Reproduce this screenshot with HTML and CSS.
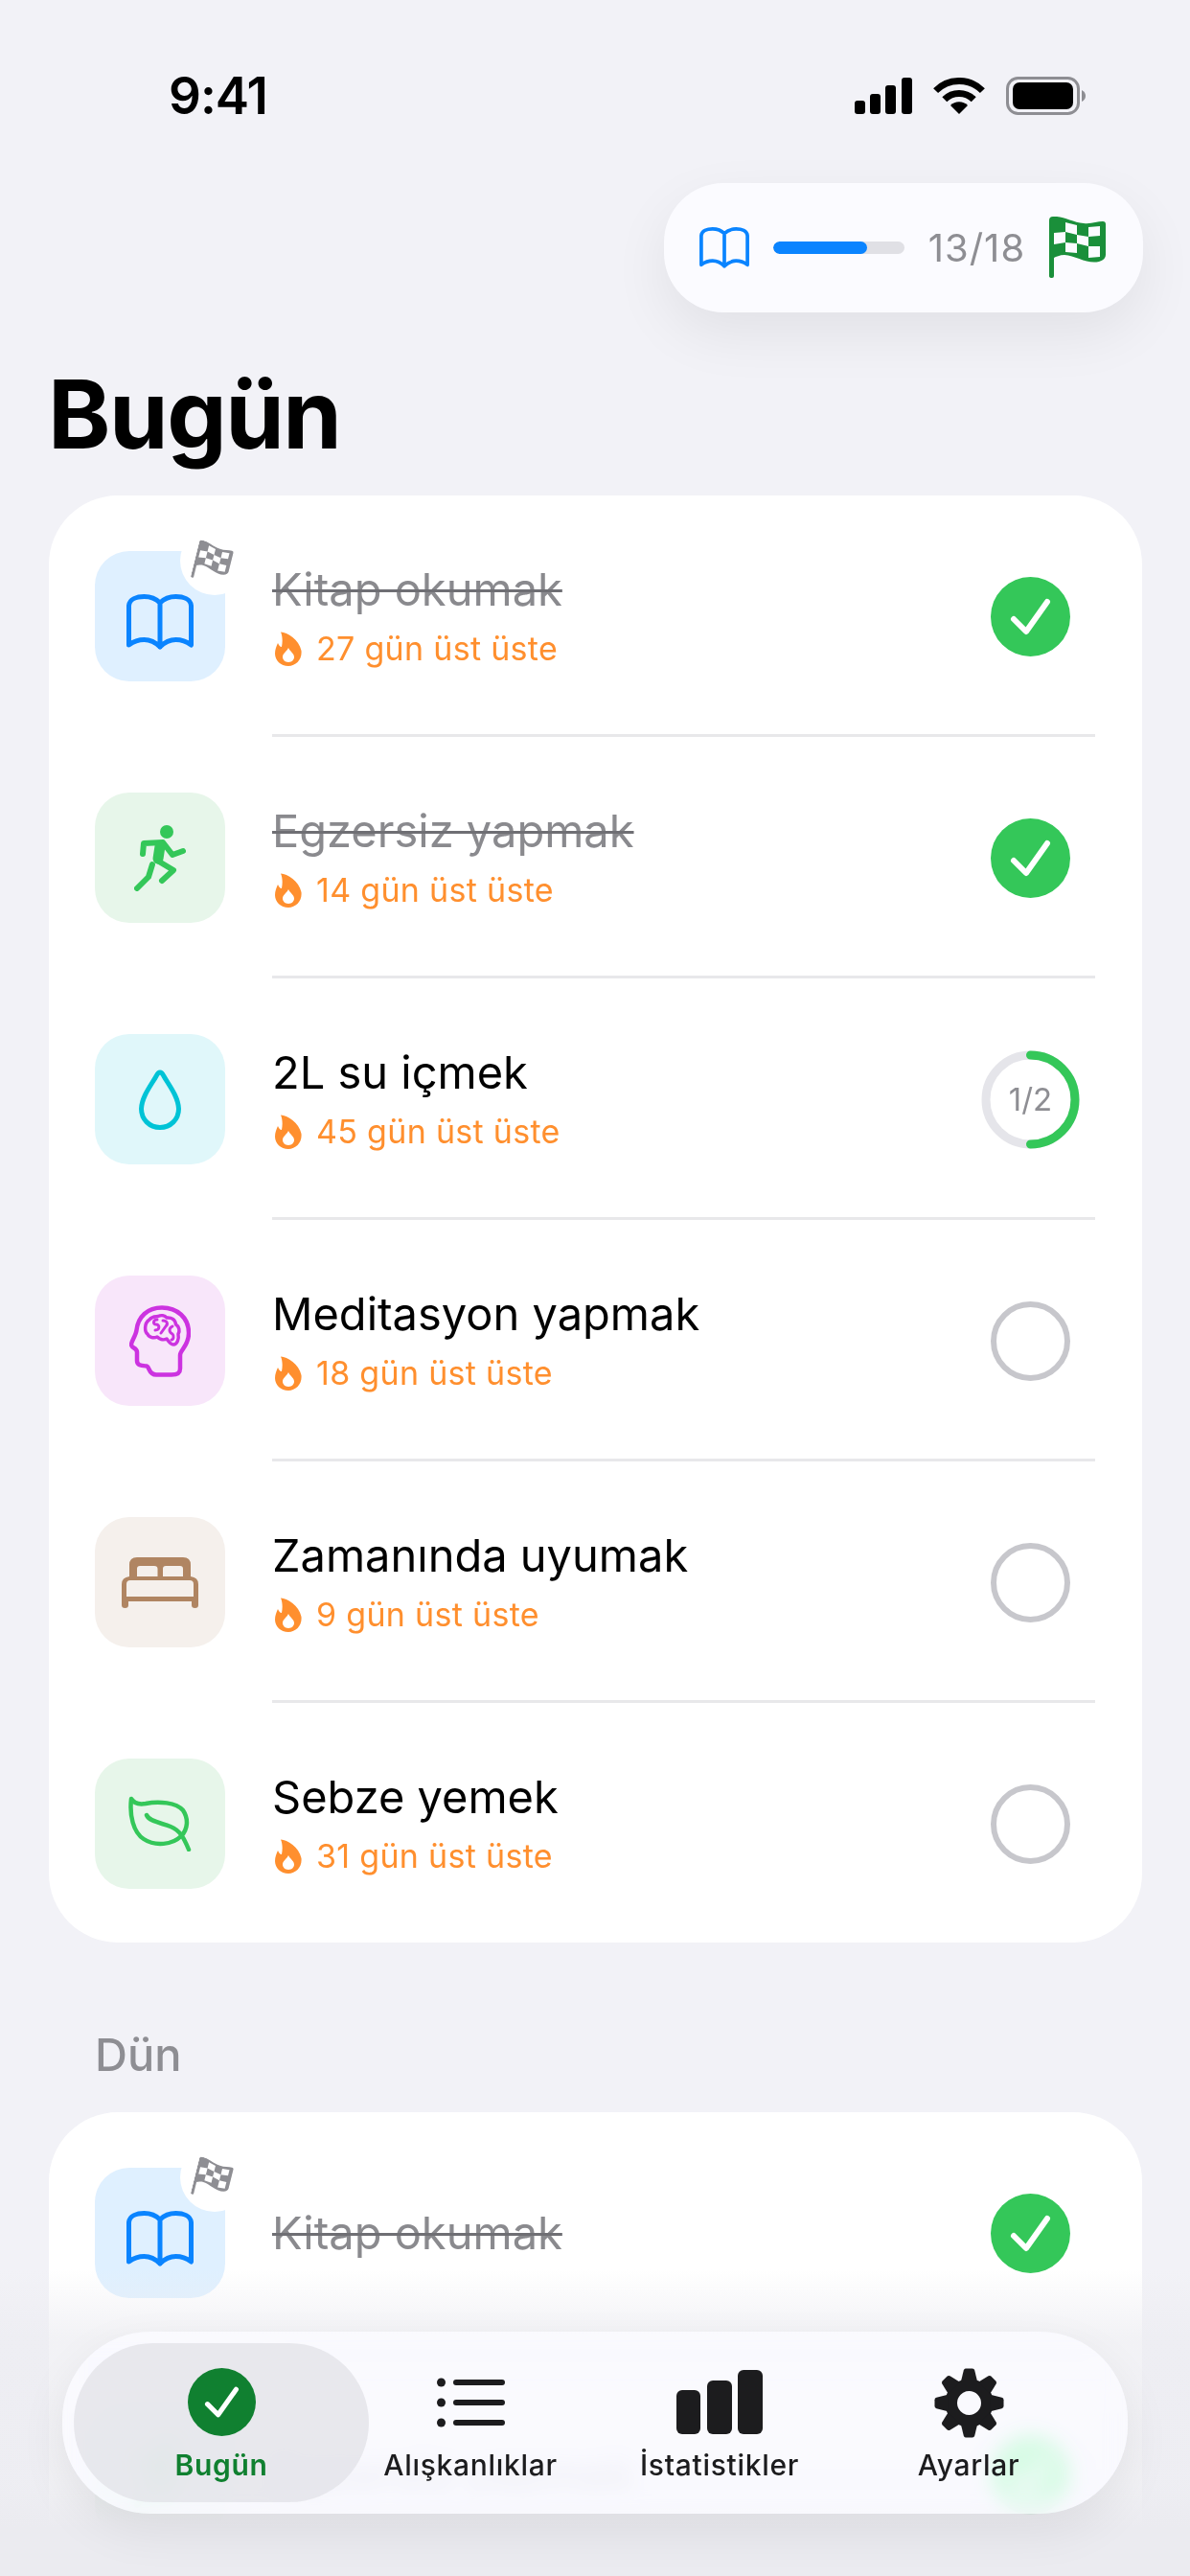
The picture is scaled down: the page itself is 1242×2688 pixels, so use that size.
FILE: index.html
```html
<!DOCTYPE html>
<html lang="tr">
<head>
    <meta charset="UTF-8">
    <meta name="viewport" content="width=device-width, initial-scale=1.0">
    <title>Bugün</title>
    <link rel="stylesheet" href="styles.css">
</head>
<body>
    <svg class="defs" xmlns="http://www.w3.org/2000/svg">
        <symbol id="book" viewBox="0 0 70 58">
            <path fill="none" stroke="currentColor" stroke-width="5" stroke-linecap="round" stroke-linejoin="round" d="M35 9C30 4 24 2.5 18.500 2.500C11 2.500 3 5 2.500 12V53C8 49 13 47.500 18.500 47.500C25 47.500 30 50 35 55C40 50 45 47.500 51.500 47.500C57 47.500 62 49 67.500 53V12C67 5 59 2.500 51.500 2.500C46 2.500 40 4 35 9V55"/>
        </symbol>
        <symbol id="flag" viewBox="0 0 60 65">
            <path fill="currentColor" fill-rule="evenodd" d="M0 4Q0 0 4 0C14-1 24 6 36 7C44 8 50 5 56 5Q59 5 59 8V40Q59 45 52 47C40 50 28 41 16 40C11 40 7 42 5 43V62Q5 64 3 64Q0 64 0 62ZM17 6L29 9V19L17 16ZM41 11L53 10V20L41 21ZM5 17L17 16V27L5 29ZM29 19L41 21V31L29 28ZM17 27L29 28V38L17 37ZM41 31L53 31V42L41 43Z"/>
        </symbol>
        <symbol id="flame" viewBox="0 0 28 36">
            <path fill="currentColor" fill-rule="evenodd" d="M6 .5C13 1 25 8 27.500 20C28.500 29 22 36 14 36C6 36 0 30 0 23C0 19 1.500 15 3 12C4 14 5 16 7 16C8 11 8 5 6 .5ZM14 32C10 32 8 29 8 26.500C8 23 12 21 14 17C16 21 20 23 20 26.500C20 29 18 32 14 32Z"/>
        </symbol>
        <symbol id="check" viewBox="0 0 83 83">
            <circle cx="41.500" cy="41.500" r="41.500" fill="currentColor"/>
            <path fill="none" stroke="#fff" stroke-width="6" stroke-linecap="round" stroke-linejoin="round" d="M24 44L37 57L59 26"/>
        </symbol>
        <symbol id="run" viewBox="0 0 54 69">
            <circle cx="34" cy="7" r="7" fill="currentColor"/>
            <g fill="none" stroke="currentColor" stroke-linecap="round" stroke-linejoin="round">
                <path stroke-width="6" d="M9 30L10 19L30 18L40 31L51 27"/>
                <path stroke-width="11" d="M27 22L25 35"/>
                <path stroke-width="6" d="M26 38L41 47L29 58"/>
                <path stroke-width="6" d="M19 41L15 54L3 66"/>
            </g>
        </symbol>
    </svg>

    <div class="statusbar">
        <span class="clock">9:41</span>
        <div class="status-icons">
            <svg class="signal" viewBox="0 0 60 38">
                <rect x="0" y="24" width="11" height="14" rx="3"/>
                <rect x="16" y="17" width="11" height="21" rx="3"/>
                <rect x="32" y="8" width="11" height="30" rx="3"/>
                <rect x="49" y="0" width="11" height="38" rx="3"/>
            </svg>
            <svg class="wifi" viewBox="0 0 54 38">
                <path fill="none" stroke="#000" stroke-width="7" d="M2.600 13.600A34.500 34.500 0 0 1 51.400 13.600M11.800 22.800A21.500 21.500 0 0 1 42.200 22.800"/>
                <path d="M27 38L18 29A12.700 12.700 0 0 1 36 29Z"/>
            </svg>
            <svg class="battery" viewBox="0 0 83 40">
                <rect x="1.500" y="1.500" width="74" height="37" rx="11" fill="none" stroke="#8e8e93" stroke-width="3"/>
                <rect x="7" y="6" width="63" height="28" rx="7"/>
                <path d="M79 14Q83 16 83 20Q83 24 79 26Z" fill="#8e8e93"/>
            </svg>
        </div>
    </div>

    <div class="goal-wrap">
        <div class="goal-pill">
            <svg class="goal-book"><use href="#book"/></svg>
            <div class="goal-bar"><div class="goal-fill" style="width: 72%"></div></div>
            <span class="goal-count">13/18</span>
            <svg class="goal-flag"><use href="#flag"/></svg>
        </div>
    </div>

    <h1 class="page-title">Bugün</h1>

    <section class="card">
        <div class="row">
            <div class="tile tile-blue">
                <svg class="ic-book"><use href="#book"/></svg>
                <span class="badge"><svg><use href="#flag"/></svg></span>
            </div>
            <div class="info">
                <div class="name done">Kitap okumak</div>
                <div class="streak"><svg><use href="#flame"/></svg><span>27 gün üst üste</span></div>
            </div>
            <div class="slot"><svg class="mark"><use href="#check"/></svg></div>
        </div>
        <hr class="sep">
        <div class="row">
            <div class="tile tile-green">
                <svg class="ic-run"><use href="#run"/></svg>
            </div>
            <div class="info">
                <div class="name done">Egzersiz yapmak</div>
                <div class="streak"><svg><use href="#flame"/></svg><span>14 gün üst üste</span></div>
            </div>
            <div class="slot"><svg class="mark"><use href="#check"/></svg></div>
        </div>
        <hr class="sep">
        <div class="row">
            <div class="tile tile-cyan">
                <svg class="ic-drop" viewBox="0 0 44 63">
                    <path fill="none" stroke="currentColor" stroke-width="5" stroke-linejoin="round" d="M22 3C24 3 25 5 26 7C31 16 41 28 41.500 41C41.500 52 33 60.500 22 60.500C11 60.500 2.500 52 2.500 41C3 28 13 16 18 7C19 5 20 3 22 3Z"/>
                </svg>
            </div>
            <div class="info">
                <div class="name">2L su içmek</div>
                <div class="streak"><svg><use href="#flame"/></svg><span>45 gün üst üste</span></div>
            </div>
            <div class="slot progress">
                <svg viewBox="0 0 103 103">
                    <circle cx="51.500" cy="51.500" r="46.500" fill="none" stroke="#e5e5ea" stroke-width="9"/>
                    <path fill="none" stroke="#34c759" stroke-width="9" stroke-linecap="round" d="M51.500 5A46.500 46.500 0 0 1 51.500 98"/>
                </svg>
                <span class="progress-text">1/2</span>
            </div>
        </div>
        <hr class="sep">
        <div class="row">
            <div class="tile tile-purple">
                <svg class="ic-brain" viewBox="0 0 64 75">
                    <g fill="none" stroke="currentColor" stroke-linecap="round" stroke-linejoin="round">
                        <path stroke-width="4.500" d="M53 66V52C53 47 62 42 62 29C62 13 50 2.500 34 2.500C19 2.500 9 12 7.500 26C7 31 2 38 2 41C2 45 8 44 8 49V58C8 63 13 63 18 63.500C21 64 20 72.500 28 72.500H44C50 72.500 53 71 53 66Z"/>
                        <path stroke-width="3.500" d="M21 15C24 11 28 12 30 11.500C33 10 37 10.500 39 13C44 12.500 48 15 48.500 20C52 22 53 27 51 30C52 35 50 41 46 41C43 41 41 38 39 35C35 37 31 35 29 33C25 35 20 33 19 30C16 28 15 19 21 15Z"/>
                        <path stroke-width="3" d="M29 15C25 15 24 20 28 20C32 20 32 26 27 26M35 16C39 16 41 19 38 22L33 29M45 22C41 24 41 28 45 30C47 32 46 36 44 36"/>
                    </g>
                </svg>
            </div>
            <div class="info">
                <div class="name">Meditasyon yapmak</div>
                <div class="streak"><svg><use href="#flame"/></svg><span>18 gün üst üste</span></div>
            </div>
            <div class="slot"><span class="empty"></span></div>
        </div>
        <hr class="sep">
        <div class="row">
            <div class="tile tile-sand">
                <svg class="ic-bed" viewBox="0 0 80 53">
                    <path fill="currentColor" fill-rule="evenodd" d="M8 8Q8 0 16 0H64Q72 0 72 8V20Q80 21 80 28V50Q80 53 76.500 53Q73 53 73 50V46H7V50Q7 53 3.500 53Q0 53 0 50V28Q0 21 8 20ZM16 20V12Q16 9 19 9H34Q37.500 9 37.500 12V20ZM43 20V12Q43 9 46 9H61Q64 9 64 12V20ZM9 24H71Q75 24 75 28V41H5V28Q5 24 9 24Z"/>
                </svg>
            </div>
            <div class="info">
                <div class="name">Zamanında uyumak</div>
                <div class="streak"><svg><use href="#flame"/></svg><span>9 gün üst üste</span></div>
            </div>
            <div class="slot"><span class="empty"></span></div>
        </div>
        <hr class="sep">
        <div class="row">
            <div class="tile tile-green">
                <svg class="ic-leaf" viewBox="0 0 67 58">
                    <path fill="none" stroke="currentColor" stroke-width="4.500" stroke-linecap="round" stroke-linejoin="round" d="M3 3C6 8 12 9 18 8C32 5 50 7 57 15C63 24 62 35 55 42C46 51 28 53 16 45C5 38 1 20 3 3ZM19 20C22 27 34 28 44 32C54 36 58 44 63 56"/>
                </svg>
            </div>
            <div class="info">
                <div class="name">Sebze yemek</div>
                <div class="streak"><svg><use href="#flame"/></svg><span>31 gün üst üste</span></div>
            </div>
            <div class="slot"><span class="empty"></span></div>
        </div>
    </section>

    <h2 class="section-title">Dün</h2>

    <section class="card">
        <div class="row">
            <div class="tile tile-blue">
                <svg class="ic-book"><use href="#book"/></svg>
                <span class="badge"><svg><use href="#flag"/></svg></span>
            </div>
            <div class="info">
                <div class="name done">Kitap okumak</div>
            </div>
            <div class="slot"><svg class="mark"><use href="#check"/></svg></div>
        </div>
        <hr class="sep">
        <div class="row">
            <div class="tile tile-green">
                <svg class="ic-run"><use href="#run"/></svg>
            </div>
            <div class="info">
                <div class="name done">Egzersiz yapmak</div>
            </div>
            <div class="slot"><svg class="mark"><use href="#check"/></svg></div>
        </div>
    </section>

    <div class="fade"></div>

    <nav class="tabbar">
        <div class="tab active">
            <svg class="tab-icon tab-check"><use href="#check"/></svg>
            <span class="tab-label">Bugün</span>
        </div>
        <div class="tab">
            <svg class="tab-icon" viewBox="0 0 71 73">
                <circle cx="4.500" cy="15" r="4.500"/>
                <circle cx="4.500" cy="36" r="4.500"/>
                <circle cx="4.500" cy="57" r="4.500"/>
                <rect x="17" y="12" width="54" height="6" rx="3"/>
                <rect x="17" y="33" width="54" height="6" rx="3"/>
                <rect x="17" y="54" width="54" height="6" rx="3"/>
            </svg>
            <span class="tab-label">Alışkanlıklar</span>
        </div>
        <div class="tab">
            <svg class="tab-icon" viewBox="0 0 90 73">
                <rect x="0" y="23" width="25" height="46" rx="6"/>
                <rect x="32" y="13" width="26" height="56" rx="6"/>
                <rect x="64" y="2" width="26" height="67" rx="6"/>
            </svg>
            <span class="tab-label">İstatistikler</span>
        </div>
        <div class="tab">
            <svg class="tab-icon" viewBox="-38 -38 76 76">
                <circle r="19.500" fill="none" stroke="#1c1c1e" stroke-width="13"/>
                <g>
                    <path id="tooth" d="M-9-23L-6-35.500Q-5.500-37.500-3.500-37.500H3.500Q5.500-37.500 6-35.500L9-23Z"/>
                    <use href="#tooth" transform="rotate(45)"/>
                    <use href="#tooth" transform="rotate(90)"/>
                    <use href="#tooth" transform="rotate(135)"/>
                    <use href="#tooth" transform="rotate(180)"/>
                    <use href="#tooth" transform="rotate(225)"/>
                    <use href="#tooth" transform="rotate(270)"/>
                    <use href="#tooth" transform="rotate(315)"/>
                </g>
            </svg>
            <span class="tab-label">Ayarlar</span>
        </div>
    </nav>
</body>
</html>
```
FILE: styles.css
```css
* {
    box-sizing: border-box;
}

html, body {
    margin: 0;
    padding: 0;
}

body {
    position: relative;
    width: 1242px;
    height: 2688px;
    overflow: hidden;
    background-color: #f2f2f7;
    font-family: Inter, "Liberation Sans", sans-serif;
    color: #000;
}

.defs {
    display: none;
}

/* status bar */
.statusbar {
    display: flex;
    justify-content: space-between;
    align-items: center;
    height: 40px;
    margin-top: 80px;
    padding: 0 109px 0 176px;
}

.clock {
    font-size: 53px;
    font-weight: 600;
    line-height: 40px;
    letter-spacing: -1px;
}

.status-icons {
    display: flex;
    align-items: center;
    gap: 22px;
}

.signal {
    width: 60px;
    height: 38px;
}

.wifi {
    width: 54px;
    height: 38px;
}

.battery {
    width: 83px;
    height: 40px;
}

/* goal pill */
.goal-wrap {
    display: flex;
    justify-content: flex-end;
    margin-top: 71px;
    padding-right: 49px;
}

.goal-pill {
    display: flex;
    justify-content: space-between;
    align-items: center;
    width: 500px;
    height: 135px;
    padding: 0 38px 0 37px;
    background-color: #fbfbff;
    border-radius: 62px;
    box-shadow: 0 22px 60px rgba(0, 0, 0, 0.07);
}

.goal-book {
    width: 52px;
    height: 43px;
    color: #0a84ff;
}

.goal-bar {
    width: 137px;
    height: 13px;
    background-color: #e0e0e5;
    border-radius: 7px;
    overflow: hidden;
}

.goal-fill {
    height: 100%;
    background-color: #0a84ff;
    border-radius: 7px;
}

.goal-count {
    font-size: 40px;
    letter-spacing: 1px;
    color: #8e8e93;
}

.goal-flag {
    width: 60px;
    height: 65px;
    color: #1a8f3a;
}

/* headings */
.page-title {
    margin: 46px 0 25px;
    padding-left: 50px;
    font-size: 99px;
    font-weight: 700;
    line-height: 120px;
    letter-spacing: -1.5px;
}

.section-title {
    margin: 91px 0 34px;
    padding-left: 99px;
    font-size: 47px;
    font-weight: 500;
    line-height: 52px;
    color: #8e8e93;
}

/* habit list */
.card {
    width: 1141px;
    margin-left: 51px;
    padding: 58px 0 56px;
    background-color: #fff;
    border-radius: 72px;
}

.row {
    display: flex;
    align-items: center;
    height: 136px;
    padding: 0 49px 0 48px;
}

.sep {
    height: 3px;
    margin: 55px 49px 58px 233px;
    border: 0;
    background-color: #e8e8ea;
}

.tile {
    position: relative;
    display: flex;
    justify-content: center;
    align-items: center;
    flex: none;
    width: 136px;
    height: 136px;
    border-radius: 36px;
}

.tile-blue {
    background-color: #dff0ff;
    color: #0a84ff;
}

.tile-green {
    background-color: #e7f6ea;
    color: #34c759;
}

.tile-cyan {
    background-color: #e0f7fa;
    color: #00c3d6;
}

.tile-purple {
    background-color: #f8e6fa;
    color: #cc33e0;
}

.tile-sand {
    background-color: #f5f0ec;
    color: #b08562;
}

.ic-book {
    width: 70px;
    height: 58px;
    margin-top: 12px;
}

.ic-run {
    width: 54px;
    height: 69px;
}

.ic-drop {
    width: 44px;
    height: 63px;
}

.ic-brain {
    width: 64px;
    height: 75px;
}

.ic-bed {
    width: 80px;
    height: 53px;
}

.ic-leaf {
    width: 67px;
    height: 58px;
}

.badge {
    position: absolute;
    top: -26px;
    right: -25px;
    display: flex;
    justify-content: center;
    align-items: center;
    width: 72px;
    height: 72px;
    background-color: #fff;
    border-radius: 50%;
    color: #8e8e93;
}

.badge svg {
    width: 38px;
    height: 41px;
    margin: 5px 0 0 -4px;
    transform: rotate(14deg);
}

.info {
    display: flex;
    flex-direction: column;
    flex: 1;
    margin-left: 49px;
}

.name {
    font-size: 47px;
    line-height: 56px;
}

.name.done {
    color: #8a8a8e;
    text-decoration: line-through;
    text-decoration-color: #6f6f74;
    text-decoration-thickness: 3px;
}

.streak {
    display: flex;
    align-items: center;
    gap: 15px;
    margin: 12px 0 0 3px;
    font-size: 34px;
    line-height: 44px;
    letter-spacing: 0.3px;
    color: #ff8f2e;
}

.streak svg {
    width: 28px;
    height: 36px;
}

.slot {
    position: relative;
    display: flex;
    justify-content: center;
    align-items: center;
    flex: none;
    width: 103px;
    height: 103px;
    margin-right: 16px;
}

.mark {
    width: 83px;
    height: 83px;
    color: #34c759;
}

.empty {
    width: 83px;
    height: 83px;
    border: 6px solid #c7c7cc;
    border-radius: 50%;
}

.progress svg {
    width: 103px;
    height: 103px;
}

.progress-text {
    position: absolute;
    font-size: 33px;
    color: #8e8e93;
}

/* bottom */
.fade {
    position: absolute;
    left: 0;
    right: 0;
    bottom: 0;
    height: 320px;
    background: linear-gradient(to bottom, rgba(236, 236, 241, 0) 0%, rgba(236, 236, 241, 0.68) 22%, rgba(236, 236, 241, 0.72) 70%, rgba(235, 235, 240, 1) 84%);
}

.tabbar {
    position: absolute;
    left: 65px;
    top: 2433px;
    display: flex;
    gap: 48px;
    width: 1112px;
    height: 190px;
    padding: 12px;
    background-color: rgba(252, 252, 255, 0.72);
    border-radius: 92px;
    box-shadow: 0 18px 50px rgba(0, 0, 0, 0.07);
    backdrop-filter: blur(10px) saturate(3);
}

.tab {
    display: flex;
    flex-direction: column;
    align-items: center;
    flex: none;
    width: 212px;
    padding-top: 26px;
    color: #1c1c1e;
}

.tab.active {
    width: 308px;
    margin-right: -48px;
    background-color: rgba(228, 228, 232, 0.8);
    border-radius: 83px;
    color: #108030;
}

.tab-icon {
    height: 73px;
    fill: currentColor;
}

.tab-check {
    width: 71px;
    height: 71px;
    margin-bottom: 2px;
}

.tab-label {
    margin-top: 10px;
    font-size: 30px;
    font-weight: 500;
    line-height: 36px;
    letter-spacing: 0.7px;
}

.tab.active .tab-label {
    font-weight: 600;
}
```
